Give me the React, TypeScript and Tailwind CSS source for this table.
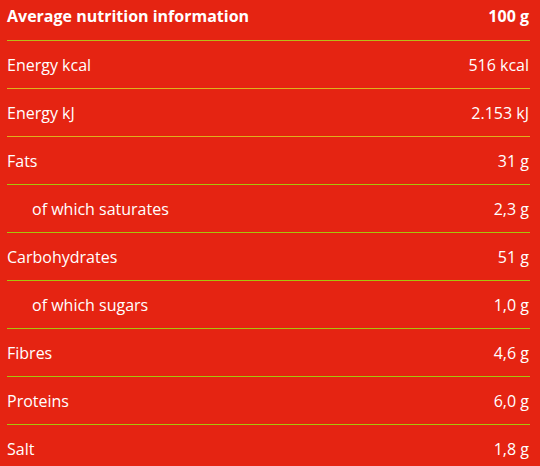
import React from "react";

const rows: { label: string; value: string; indent?: boolean; line: string }[] = [
  { label: "Energy kcal", value: "516 kcal", line: "border-[#dcb41c]" },
  { label: "Energy kJ", value: "2.153 kJ", line: "border-[#e0b01c]" },
  { label: "Fats", value: "31 g", line: "border-[#a8c40c]" },
  { label: "of which saturates", value: "2,3 g", indent: true, line: "border-[#a8c40c]" },
  { label: "Carbohydrates", value: "51 g", line: "border-[#a8c40c]" },
  { label: "of which sugars", value: "1,0 g", indent: true, line: "border-[#a8c40c]" },
  { label: "Fibres", value: "4,6 g", line: "border-[#a8c40c]" },
  { label: "Proteins", value: "6,0 g", line: "border-[#a8c40c]" },
  { label: "Salt", value: "1,8 g", line: "border-transparent" },
];

export default function App() {
  return (
    <div
      className="w-[540px] h-[466px] overflow-hidden bg-[#e52412] text-white pl-[7px] pr-[10px]"
      style={{ fontFamily: '"Open Sans", sans-serif' }}
    >
      <div className="flex h-[41px] items-center justify-between border-b border-[#b8bc18] pb-[8px] text-[16px] font-bold">
        <span>Average nutrition information</span>
        <span className="pr-[1px]">100 g</span>
      </div>
      {rows.map((r) => (
        <div
          key={r.label}
          className={`flex h-[48px] items-center justify-between border-b ${r.line} text-[16px]`}
        >
          <span className={r.indent ? "pl-[25px]" : ""}>{r.label}</span>
          <span className="pr-[1px]">{r.value}</span>
        </div>
      ))}
    </div>
  );
}
